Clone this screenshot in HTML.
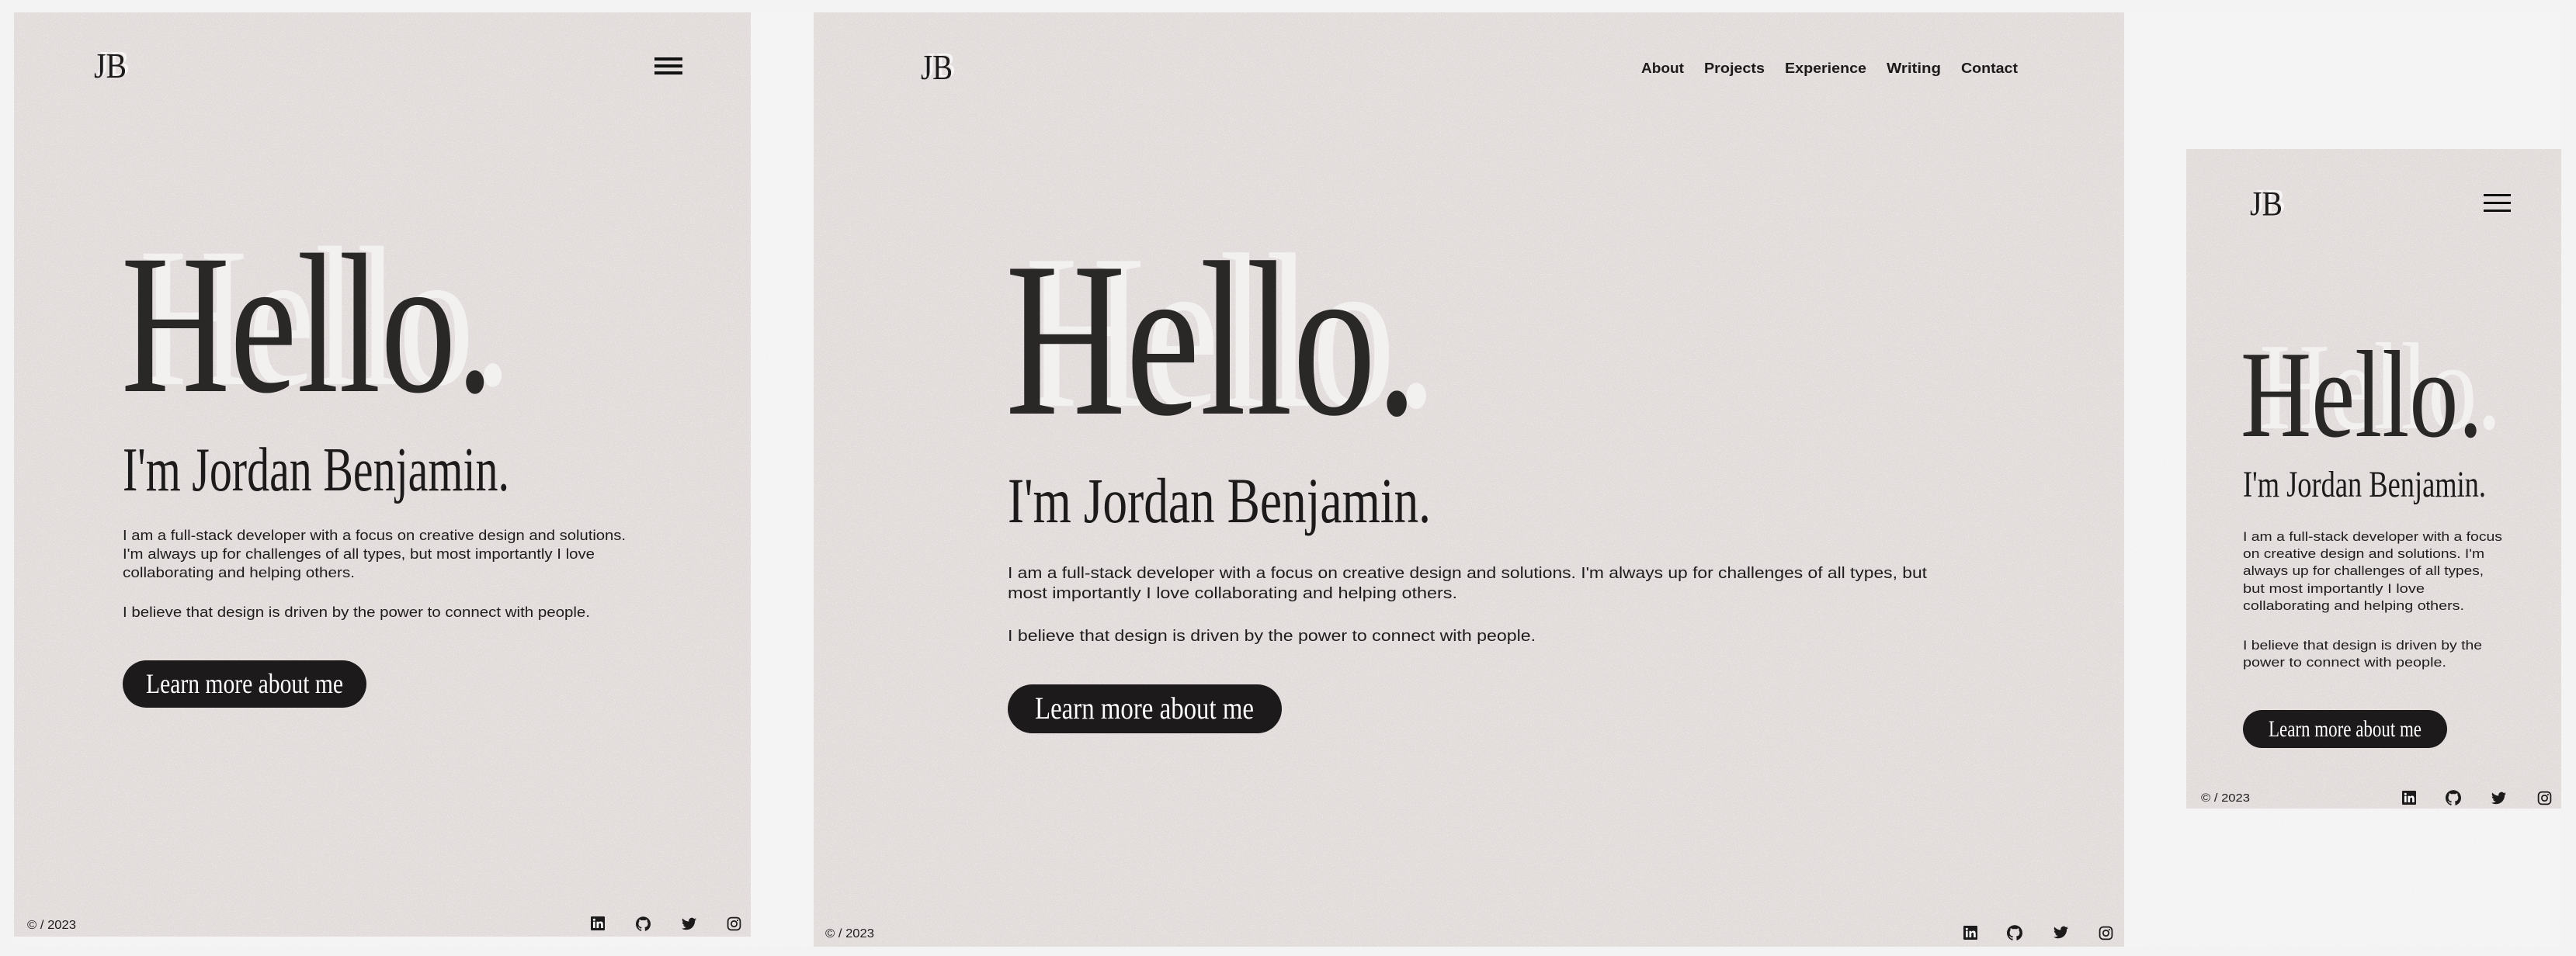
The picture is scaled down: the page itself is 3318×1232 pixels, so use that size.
<!DOCTYPE html>
<html><head><meta charset="utf-8"><style>
html,body{margin:0;padding:0;background:#f4f3f3;width:3318px;height:1232px;overflow:hidden}
svg{display:block}
.sf{font-family:"Liberation Serif",serif}
.ss{font-family:"Liberation Sans",sans-serif}
</style></head><body>
<svg width="3318" height="1232" viewBox="0 0 3318 1232" xmlns="http://www.w3.org/2000/svg">
<defs>
<filter id="n" x="0" y="0" width="100%" height="100%">
<feTurbulence type="fractalNoise" baseFrequency="0.9" numOctaves="1" seed="3"/>
<feColorMatrix type="matrix" values="0 0 0 0 1  0 0 0 0 1  0 0 0 0 1  0 0 0 3.2 -1.6"/>
</filter>
<symbol id="li" viewBox="0 0 24 24"><rect width="24" height="24" rx="1.5" fill="#1c1a1a"/><rect x="4" y="9" width="3.5" height="11" fill="#fff"/><circle cx="5.75" cy="5.6" r="2" fill="#fff"/><path fill="#fff" d="M10 9h3.3v1.6c.5-.9 1.7-1.9 3.5-1.9 3.6 0 4.2 2.3 4.2 5.3V20h-3.5v-5.3c0-1.3 0-2.9-1.8-2.9s-2.1 1.4-2.1 2.8V20H10z"/></symbol>
<symbol id="gh" viewBox="0 0 24 24"><path fill="#1c1a1a" d="M12 .297c-6.63 0-12 5.373-12 12 0 5.303 3.438 9.8 8.205 11.385.6.113.82-.258.82-.577 0-.285-.01-1.04-.015-2.04-3.338.724-4.042-1.61-4.042-1.61C4.422 18.07 3.633 17.7 3.633 17.7c-1.087-.744.084-.729.084-.729 1.205.084 1.838 1.236 1.838 1.236 1.07 1.835 2.809 1.305 3.495.998.108-.776.417-1.305.76-1.605-2.665-.3-5.466-1.332-5.466-5.930 0-1.31.465-2.38 1.235-3.22-.135-.303-.54-1.523.105-3.176 0 0 1.005-.322 3.3 1.23.96-.267 1.98-.399 3-.405 1.02.006 2.04.138 3 .405 2.28-1.552 3.285-1.23 3.285-1.23.645 1.653.24 2.873.12 3.176.765.84 1.23 1.91 1.23 3.22 0 4.61-2.805 5.625-5.475 5.92.42.36.81 1.096.81 2.22 0 1.606-.015 2.896-.015 3.286 0 .315.21.69.825.57C20.565 22.092 24 17.592 24 12.297c0-6.627-5.373-12-12-12"/></symbol>
<symbol id="tw" viewBox="0 0 24 24"><path fill="#1c1a1a" d="M23.953 4.57a10 10 0 01-2.825.775 4.958 4.958 0 002.163-2.723c-.951.555-2.005.959-3.127 1.184a4.92 4.92 0 00-8.384 4.482C7.69 8.095 4.067 6.13 1.64 3.162a4.822 4.822 0 00-.666 2.475c0 1.71.87 3.213 2.188 4.096a4.904 4.904 0 01-2.228-.616v.06a4.923 4.923 0 003.946 4.827 4.996 4.996 0 01-2.212.085 4.936 4.936 0 004.604 3.417 9.867 9.867 0 01-6.102 2.105c-.39 0-.779-.023-1.17-.067a13.995 13.995 0 007.557 2.209c9.053 0 13.998-7.496 13.998-13.985 0-.21 0-.42-.015-.63A9.935 9.935 0 0024 4.59z"/></symbol>
<symbol id="ig" viewBox="0 0 24 24"><rect x="2" y="2" width="20" height="20" rx="5.5" fill="none" stroke="#1c1a1a" stroke-width="2.2"/><circle cx="12" cy="12" r="4.6" fill="none" stroke="#1c1a1a" stroke-width="2.2"/><circle cx="17.6" cy="6.4" r="1.3" fill="#1c1a1a"/></symbol>
</defs>

<!-- panels -->
<g fill="#e1dbda">
<rect x="18" y="16" width="949" height="1191"/>
<rect x="1048" y="16" width="1688" height="1204"/>
<rect x="2816" y="192" width="483" height="850"/>
</g>
<g filter="url(#n)" opacity="0.55">
<rect x="18" y="16" width="949" height="1191"/>
<rect x="1048" y="16" width="1688" height="1204"/>
<rect x="2816" y="192" width="483" height="850"/>
</g>

<!-- ===== Panel 1 ===== -->
<text class="sf" x="125" y="97" font-size="46" fill="#f6f4f4" textLength="42" lengthAdjust="spacingAndGlyphs">JB</text>
<text class="sf" x="121" y="100" font-size="46" fill="#1c1a1a" textLength="42" lengthAdjust="spacingAndGlyphs">JB</text>
<g fill="#111"><rect x="843" y="74" width="36" height="4"/><rect x="843" y="83" width="36" height="4"/><rect x="843" y="92" width="36" height="4"/></g>
<text class="sf" x="179" y="495" font-size="257" fill="#f3f1f0" textLength="480" lengthAdjust="spacingAndGlyphs">Hello.</text>
<text class="sf" x="156" y="504" font-size="257" fill="#2a2727" textLength="480" lengthAdjust="spacingAndGlyphs">Hello.</text>
<text class="sf" x="158" y="632" font-size="80" fill="#1c1a1a" textLength="498" lengthAdjust="spacingAndGlyphs">I'm Jordan Benjamin.</text>
<g class="ss" font-size="18" fill="#1e1c1c">
<text x="158" y="696" textLength="648" lengthAdjust="spacingAndGlyphs">I am a full-stack developer with a focus on creative design and solutions.</text>
<text x="158" y="720" textLength="608" lengthAdjust="spacingAndGlyphs">I'm always up for challenges of all types, but most importantly I love</text>
<text x="158" y="744" textLength="299" lengthAdjust="spacingAndGlyphs">collaborating and helping others.</text>
<text x="158" y="795" textLength="602" lengthAdjust="spacingAndGlyphs">I believe that design is driven by the power to connect with people.</text>
</g>
<rect x="158" y="851" width="314" height="61" rx="30.5" fill="#1c1a1a"/>
<text class="sf" x="188" y="893" font-size="36" fill="#fff" textLength="254" lengthAdjust="spacingAndGlyphs">Learn more about me</text>
<text class="ss" x="35" y="1197" font-size="16" fill="#1e1c1c" textLength="63" lengthAdjust="spacingAndGlyphs">© / 2023</text>
<use href="#li" x="761" y="1181" width="18" height="18"/>
<use href="#gh" x="819" y="1181" width="19" height="19"/>
<use href="#tw" x="878" y="1181" width="19" height="19"/>
<use href="#ig" x="936" y="1181" width="19" height="19"/>

<!-- ===== Panel 2 ===== -->
<text class="sf" x="1190" y="99" font-size="46" fill="#f6f4f4" textLength="41" lengthAdjust="spacingAndGlyphs">JB</text>
<text class="sf" x="1186" y="102" font-size="46" fill="#1c1a1a" textLength="41" lengthAdjust="spacingAndGlyphs">JB</text>
<g class="ss" font-size="18" fill="#1c1a1a" font-weight="bold">
<text x="2114" y="94" textLength="55" lengthAdjust="spacingAndGlyphs">About</text>
<text x="2195" y="94" textLength="78" lengthAdjust="spacingAndGlyphs">Projects</text>
<text x="2299" y="94" textLength="105" lengthAdjust="spacingAndGlyphs">Experience</text>
<text x="2430" y="94" textLength="70" lengthAdjust="spacingAndGlyphs">Writing</text>
<text x="2526" y="94" textLength="73" lengthAdjust="spacingAndGlyphs">Contact</text>
</g>
<text class="sf" x="1320" y="523" font-size="285" fill="#f3f1f0" textLength="531" lengthAdjust="spacingAndGlyphs">Hello.</text>
<text class="sf" x="1295" y="533" font-size="285" fill="#2a2727" textLength="531" lengthAdjust="spacingAndGlyphs">Hello.</text>
<text class="sf" x="1298" y="673" font-size="83" fill="#1c1a1a" textLength="545" lengthAdjust="spacingAndGlyphs">I'm Jordan Benjamin.</text>
<g class="ss" font-size="20" fill="#1e1c1c">
<text x="1298" y="745" textLength="1184" lengthAdjust="spacingAndGlyphs">I am a full-stack developer with a focus on creative design and solutions. I'm always up for challenges of all types, but</text>
<text x="1298" y="771" textLength="579" lengthAdjust="spacingAndGlyphs">most importantly I love collaborating and helping others.</text>
<text x="1298" y="826" textLength="680" lengthAdjust="spacingAndGlyphs">I believe that design is driven by the power to connect with people.</text>
</g>
<rect x="1298" y="882" width="353" height="63" rx="31.5" fill="#1c1a1a"/>
<text class="sf" x="1333" y="926" font-size="40" fill="#fff" textLength="282" lengthAdjust="spacingAndGlyphs">Learn more about me</text>
<text class="ss" x="1063" y="1208" font-size="16" fill="#1e1c1c" textLength="63" lengthAdjust="spacingAndGlyphs">© / 2023</text>
<use href="#li" x="2529" y="1193" width="18" height="18"/>
<use href="#gh" x="2585" y="1192" width="20" height="20"/>
<use href="#tw" x="2645" y="1192" width="19" height="19"/>
<use href="#ig" x="2703" y="1193" width="19" height="19"/>

<!-- ===== Panel 3 ===== -->
<text class="sf" x="2902" y="274" font-size="44" fill="#f6f4f4" textLength="42" lengthAdjust="spacingAndGlyphs">JB</text>
<text class="sf" x="2898" y="277" font-size="44" fill="#1c1a1a" textLength="42" lengthAdjust="spacingAndGlyphs">JB</text>
<g fill="#111"><rect x="3199" y="250" width="35" height="3"/><rect x="3199" y="260" width="35" height="3"/><rect x="3199" y="270" width="35" height="3"/></g>
<text class="sf" x="2910" y="552" font-size="160" fill="#f3f1f0" textLength="312" lengthAdjust="spacingAndGlyphs">Hello.</text>
<text class="sf" x="2886" y="562" font-size="160" fill="#2a2727" textLength="312" lengthAdjust="spacingAndGlyphs">Hello.</text>
<text class="sf" x="2889" y="640" font-size="48" fill="#1c1a1a" textLength="313" lengthAdjust="spacingAndGlyphs">I'm Jordan Benjamin.</text>
<g class="ss" font-size="16.5" fill="#1e1c1c">
<text x="2889" y="697" textLength="334" lengthAdjust="spacingAndGlyphs">I am a full-stack developer with a focus</text>
<text x="2889" y="719" textLength="311" lengthAdjust="spacingAndGlyphs">on creative design and solutions. I'm</text>
<text x="2889" y="741" textLength="310" lengthAdjust="spacingAndGlyphs">always up for challenges of all types,</text>
<text x="2889" y="764" textLength="234" lengthAdjust="spacingAndGlyphs">but most importantly I love</text>
<text x="2889" y="786" textLength="285" lengthAdjust="spacingAndGlyphs">collaborating and helping others.</text>
<text x="2889" y="837" textLength="308" lengthAdjust="spacingAndGlyphs">I believe that design is driven by the</text>
<text x="2889" y="859" textLength="262" lengthAdjust="spacingAndGlyphs">power to connect with people.</text>
</g>
<rect x="2889" y="915" width="263" height="49" rx="24.5" fill="#1c1a1a"/>
<text class="sf" x="2922" y="949" font-size="30" fill="#fff" textLength="197" lengthAdjust="spacingAndGlyphs">Learn more about me</text>
<text class="ss" x="2835" y="1033" font-size="15" fill="#1e1c1c" textLength="63" lengthAdjust="spacingAndGlyphs">© / 2023</text>
<use href="#li" x="3094" y="1019" width="18" height="18"/>
<use href="#gh" x="3150" y="1018" width="20" height="20"/>
<use href="#tw" x="3209" y="1019" width="19" height="19"/>
<use href="#ig" x="3268" y="1019" width="19" height="19"/>
</svg>
</body></html>
